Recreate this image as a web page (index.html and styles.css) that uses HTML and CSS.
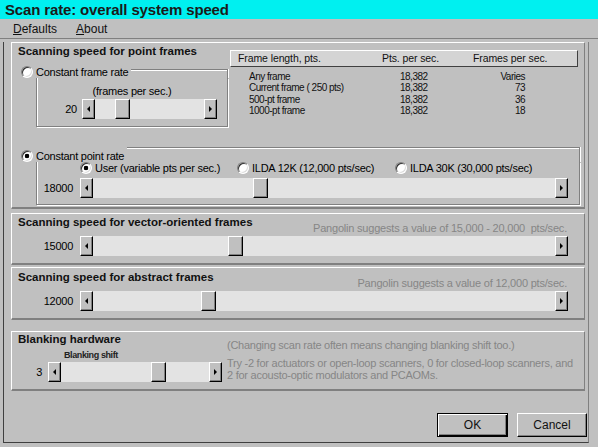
FILE: index.html
```html
<!DOCTYPE html>
<html>
<head>
<meta charset="utf-8">
<title>Scan rate</title>
<link rel="stylesheet" href="styles.css">
</head>
<body>
<div class="titlebar">Scan rate: overall system speed</div>
<div class="menubar"><span class="menu"><u>D</u>efaults</span><span class="menu"><u>A</u>bout</span></div>
<div class="client">
  <div class="frame">
    <section class="panel p1">
      <div class="p1-top">
        <div class="p1-left">
          <div class="ptitle">Scanning speed for point frames</div>
          <div class="group">
            <div class="grow g1">
              <span class="radio"></span><span class="glabel">Constant frame rate</span><span class="gline"></span>
            </div>
            <div class="gbox fbox">
              <div class="caption">(frames per sec.)</div>
              <div class="srow">
                <span class="num n-frame">20</span>
                <div class="sb"><span class="sbtn left"></span><span class="trough"><span class="thumb" style="margin-left:20px"></span></span><span class="sbtn right"></span></div>
              </div>
            </div>
          </div>
        </div>
        <div class="table">
          <div class="thead"><span>Frame length, pts.</span><span>Pts. per sec.</span><span>Frames per sec.</span></div>
          <div class="trows">
            <span>Any frame</span><span>18,382</span><span class="r">Varies</span>
            <span>Current frame ( 250 pts)</span><span>18,382</span><span class="r">73</span>
            <span>500-pt frame</span><span>18,382</span><span class="r">36</span>
            <span>1000-pt frame</span><span>18,382</span><span class="r">18</span>
          </div>
        </div>
      </div>
      <div class="group g-point">
        <div class="grow g2">
          <span class="radio on"></span><span class="glabel">Constant point rate</span><span class="gline"></span>
        </div>
        <div class="gbox pbox">
          <div class="radios">
            <span class="ropt"><span class="radio on"></span>User (variable pts per sec.)</span>
            <span class="ropt"><span class="radio"></span>ILDA 12K (12,000 pts/sec)</span>
            <span class="ropt"><span class="radio"></span>ILDA 30K (30,000 pts/sec)</span>
          </div>
          <div class="srow srow-p">
            <span class="num n-wide">18000</span>
            <div class="sb"><span class="sbtn left"></span><span class="trough"><span class="thumb" style="margin-left:160px"></span></span><span class="sbtn right"></span></div>
          </div>
        </div>
      </div>
    </section>

    <section class="panel p2">
      <div class="shead">
        <div class="ptitle">Scanning speed for vector-oriented frames</div>
        <div class="sugg">Pangolin suggests a value of 15,000 - 20,000&nbsp; pts/sec.</div>
      </div>
      <div class="srow srow-s">
        <span class="num n-sec">15000</span>
        <div class="sb"><span class="sbtn left"></span><span class="trough"><span class="thumb" style="margin-left:135px"></span></span><span class="sbtn right"></span></div>
      </div>
    </section>

    <section class="panel p3">
      <div class="shead">
        <div class="ptitle">Scanning speed for abstract frames</div>
        <div class="sugg">Pangolin suggests a value of 12,000 pts/sec.</div>
      </div>
      <div class="srow srow-s">
        <span class="num n-sec">12000</span>
        <div class="sb"><span class="sbtn left"></span><span class="trough"><span class="thumb" style="margin-left:108px"></span></span><span class="sbtn right"></span></div>
      </div>
    </section>

    <section class="panel p4">
      <div class="p4-left">
        <div class="ptitle t4">Blanking hardware</div>
        <div class="bshift">Blanking shift</div>
        <div class="srow srow-b">
          <span class="num n-b">3</span>
          <div class="sb"><span class="sbtn left"></span><span class="trough"><span class="thumb" style="margin-left:90px"></span></span><span class="sbtn right"></span></div>
        </div>
      </div>
      <div class="p4-right">
        <div class="note">(Changing scan rate often means changing blanking shift too.)</div>
        <div class="note2">Try -2 for actuators or open-loop scanners, 0 for closed-loop scanners, and<br>2 for acousto-optic modulators and PCAOMs.</div>
      </div>
    </section>

    <div class="btns">
      <button class="btn ok">OK</button>
      <button class="btn">Cancel</button>
    </div>
  </div>
</div>
</body>
</html>
```

FILE: styles.css
```css
* { box-sizing: border-box; }

body {
  margin: 0;
  width: 598px;
  height: 447px;
  overflow: hidden;
  background: #c0c0c0;
  color: #000;
  font-family: "Liberation Sans", Arial, sans-serif;
  font-size: 11px;
  letter-spacing: -0.25px;
}

.titlebar {
  height: 19px;
  background: #00f0f0;
  color: #1a1a1a;
  font-weight: bold;
  font-size: 15px;
  line-height: 19px;
  padding-left: 5px;
  letter-spacing: -0.15px;
}

.menubar {
  height: 20px;
  display: flex;
  align-items: center;
  gap: 19px;
  padding-left: 13px;
  border-bottom: 1px solid #808080;
  font-size: 12px;
  letter-spacing: 0;
  color: #111;
}

.client { padding: 3px 0 0 3px; }

.frame {
  width: 586px;
  height: 401px;
  display: flex;
  flex-direction: column;
  border-left: 1px solid #404040;
  border-right: 1px solid #808080;
  border-bottom: 1px solid #404040;
  padding: 0 3px 0 7px;
}

.panel {
  border-top: 1px solid #fff;
  border-left: 1px solid #fff;
  border-right: 1px solid #808080;
  border-bottom: 2px solid #808080;
}
.p1 { height: 167px; margin-bottom: 4px; }
.p2 { height: 52px; margin-bottom: 2px; }
.p3 { height: 53px; margin-bottom: 11px; padding-top: 1px; }
.p4 { height: 60px; display: flex; }

.ptitle {
  font-weight: bold;
  font-size: 11.5px;
  line-height: 14px;
  letter-spacing: 0;
  padding-left: 6px;
  margin-top: 1px;
  color: #111;
}

/* ---- point frames ---- */
.p1-top { display: flex; }
.p1-left { width: 216px; }

.grow { display: flex; align-items: flex-start; }
.g1 { height: 12px; margin-top: 8px; }
.g2 { height: 15px; }
.g2 .radio, .g2 .glabel { margin-top: 3px; }

.radio {
  flex: none;
  width: 12px;
  height: 12px;
  border-radius: 50%;
  background: #fff;
  border: 1px solid;
  border-color: #808080 #fff #fff #808080;
  box-shadow: inset 1px 1px 0 #303030, inset -1px -1px 0 #dcdcdc;
}
.radio.on { background: radial-gradient(circle, #000 0 2px, #fff 2.6px); }
.grow .radio { margin-left: 9px; }

.glabel { margin-left: 3px; padding-right: 3px; line-height: 12px; white-space: nowrap; }
.gline {
  flex: 1;
  height: 9px;
  margin-top: 3px;
  border-top: 1px solid #808080;
  border-right: 1px solid #808080;
  box-shadow: inset 0 1px 0 #fff, 1px 0 0 #fff;
}
.g2 .gline { margin-top: 0; height: 15px; }

.gbox {
  margin-left: 24px;
  border: 1px solid #808080;
  border-top: 0;
  box-shadow: inset 1px 0 0 #fff, 1px 1px 0 #fff;
}
.fbox { height: 49px; padding: 7px 10px 0 0; }
.caption { text-align: center; line-height: 12px; padding-left: 10px; }

.srow { display: flex; align-items: center; margin-top: 2px; }
.num { flex: none; text-align: right; }
.n-frame { width: 40px; margin-right: 5px; }
.n-wide { width: 36px; margin-right: 7px; }
.n-sec { width: 61px; margin-right: 7px; }
.n-b { width: 30px; margin-right: 6px; }

/* scrollbar */
.sb { flex: 1; display: flex; height: 20px; background: #e3e3e3; }
.sbtn, .thumb {
  flex: none;
  width: 13px;
  height: 20px;
  background: #c0c0c0;
  border-top: 1px solid #fff;
  border-left: 1px solid #fff;
  border-right: 1px solid #000;
  border-bottom: 1px solid #000;
  box-shadow: inset -1px -1px 0 #808080;
}
.sbtn { display: flex; align-items: center; justify-content: center; }
.sbtn::before { content: ""; border-top: 3px solid transparent; border-bottom: 3px solid transparent; }
.sbtn.left::before { border-right: 3px solid #000; }
.sbtn.right::before { border-left: 3px solid #000; }
.trough { flex: 1; display: flex; }
.thumb { width: 15px; }

/* table */
.table { width: 352px; margin-top: 3px; padding: 4px 2px 0; }
.thead {
  height: 17px;
  display: grid;
  grid-template-columns: 144px 91px auto;
  padding-left: 7px;
  background: #d4d4d4;
  border: 1px solid;
  border-color: #fff #404040 #404040 #fff;
  font-size: 10.5px;
  line-height: 15px;
  letter-spacing: -0.1px;
  color: #111;
}
.trows {
  display: grid;
  grid-template-columns: 151px 60px 65px;
  padding-left: 19px;
  margin-top: 4px;
  font-size: 10px;
  line-height: 11.3px;
  letter-spacing: -0.5px;
  color: #111;
}
.trows .r { text-align: right; }

.g-point { margin-top: 20px; margin-right: 4px; }
.pbox { height: 43px; padding-right: 11px; }
.radios {
  display: grid;
  grid-template-columns: 157px 158px auto;
  margin-left: 43px;
  height: 12px;
  line-height: 12px;
}
.ropt { display: flex; align-items: center; gap: 3px; white-space: nowrap; }
.srow-p { margin-top: 4px; }

/* vector / abstract */
.shead { display: flex; justify-content: space-between; height: 21px; padding-right: 17px; }
.sugg { margin-top: 7px; line-height: 14px; color: #868686; letter-spacing: -0.2px; white-space: nowrap; }
.srow-s { margin-top: 1px; padding-right: 16px; }

/* blanking */
.p4-left { width: 210px; flex: none; }
.t4 { margin-top: 0; }
.bshift {
  font-size: 9px;
  font-weight: bold;
  line-height: 11px;
  letter-spacing: -0.4px;
  margin-top: 4px;
  padding-left: 52px;
  color: #222;
}
.srow-b { margin-top: 1px; }
.p4-right { margin-left: 5px; padding-top: 7px; color: #868686; line-height: 12px; white-space: nowrap; letter-spacing: -0.25px; }
.note2 { margin-top: 6px; }

/* buttons */
.btns { display: flex; justify-content: flex-end; gap: 9px; margin-top: 22px; margin-right: -2px; }
.btn {
  width: 70px;
  height: 24px;
  padding: 0;
  background: #c0c0c0;
  font-family: "Liberation Sans", Arial, sans-serif;
  font-size: 12px;
  color: #111;
  border: 1px solid;
  border-color: #fff #000 #000 #fff;
  box-shadow: inset -1px -1px 0 #808080;
}
.btn.ok {
  width: 71px;
  border-color: #000;
  box-shadow: inset 1px 1px 0 #fff, inset -1px -1px 0 #000, inset -2px -2px 0 #808080;
}
```
